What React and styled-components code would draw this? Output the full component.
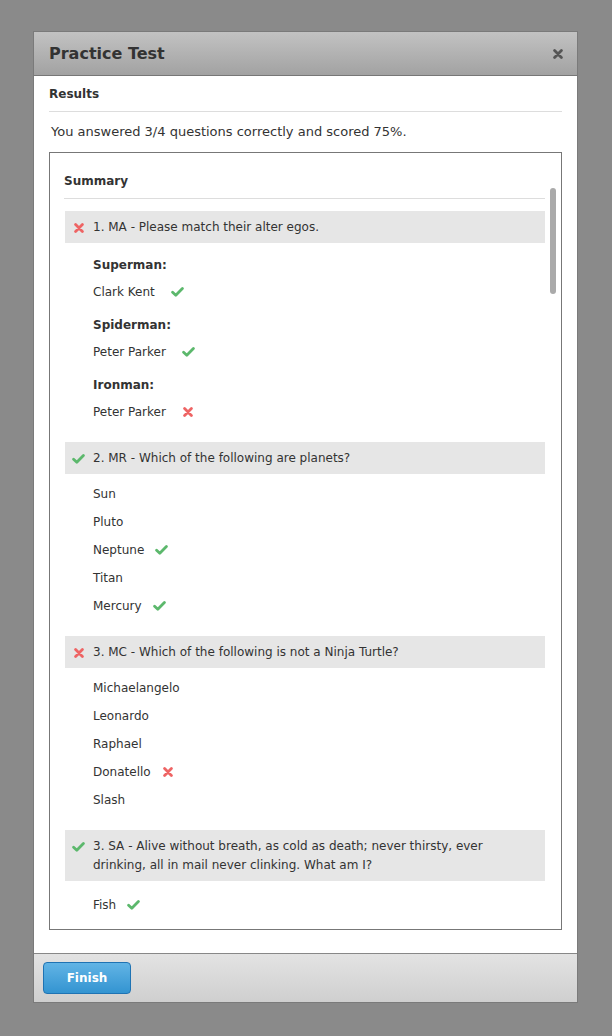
import React from "react";
import styled, { createGlobalStyle } from "styled-components";

const Global = createGlobalStyle`
html, body {
  margin: 0;
  padding: 0;
  background: #8a8a8a;
  font-family: "DejaVu Sans", Verdana, sans-serif;
  color: #333;
}
`;

const Page = styled.div`
  padding: 31px 33px 0 33px;
  height: 1036px;
  box-sizing: border-box;
`;

const Modal = styled.div`
  width: 545px;
  background: #fff;
  border: 1px solid #7a7a7a;
  box-sizing: border-box;
  display: flex;
  flex-direction: column;
`;

const Header = styled.div`
  height: 43px;
  background: linear-gradient(#c2c2c2, #a2a2a2);
  border-bottom: 1px solid #777;
  display: flex;
  align-items: center;
  justify-content: space-between;
  padding: 0 14px 0 15px;
`;

const Title = styled.h1`
  margin: 0;
  font-size: 16px;
  font-weight: bold;
  color: #333;
`;

const Close = styled.span`
  color: #555;
  display: flex;
`;

const Body = styled.div`
  padding: 11px 15px 23px 15px;
`;

const SectionTitle = styled.div`
  font-size: 12px;
  font-weight: bold;
  color: #333;
  padding-bottom: 10px;
  border-bottom: 1px solid #ddd;
`;

const Score = styled.p`
  margin: 12px 0 12px 2px;
  font-size: 13px;
  line-height: 16px;
  color: #333;
`;

const SummaryBox = styled.div`
  position: relative;
  height: 778px;
  border: 1px solid #777;
  box-sizing: border-box;
  overflow: hidden;
`;

const Scroller = styled.div`
  height: 100%;
  overflow-y: auto;
  padding: 21px 16px 0 14px;
  box-sizing: border-box;
  scrollbar-width: none;
  &::-webkit-scrollbar { display: none; }
`;

const Thumb = styled.div`
  position: absolute;
  top: 35px;
  right: 5px;
  width: 6px;
  height: 106px;
  border-radius: 3px;
  background: #aaa;
`;

const SummaryTitle = styled(SectionTitle)`
  padding-bottom: 10px;
  margin-bottom: 12px;
`;

const Question = styled.div`
  margin-bottom: 16px;
`;

const QuestionHead = styled.div`
  display: flex;
  align-items: flex-start;
  background: #e6e6e6;
  padding: 7px 10px 6px 7px;
  margin-left: 1px;
  font-size: 12px;
  line-height: 19px;
  color: #333;
`;

const Mark = styled.span`
  display: inline-flex;
  align-items: center;
  justify-content: center;
  height: 19px;
  width: 13px;
  color: ${(p) => (p.$ok ? "#5cb86c" : "#ee6464")};
  margin-right: ${(p) => p.$gap || 0}px;
  margin-left: ${(p) => p.$left || 0}px;
  flex-shrink: 0;
`;

const Answers = styled.div`
  padding: ${(p) => p.$top}px 0 0 29px;
  display: flex;
  flex-direction: column;
`;

const Label = styled.div`
  font-size: 12px;
  font-weight: bold;
  line-height: 20px;
  margin-top: ${(p) => (p.$first ? 6 : 9)}px;
  margin-bottom: 3px;
`;

const Answer = styled.div`
  display: flex;
  align-items: center;
  font-size: 12px;
  line-height: 20px;
  height: 28px;
`;

const Footer = styled.div`
  height: 48px;
  border-top: 1px solid #888;
  background: linear-gradient(#e3e3e3, #cfcfcf);
  display: flex;
  align-items: center;
  padding: 0 9px;
`;

const FinishButton = styled.button`
  width: 88px;
  height: 32px;
  border: 1px solid #1f73b3;
  border-radius: 4px;
  background: linear-gradient(#62b4e5, #3394d1);
  color: #fff;
  font-family: inherit;
  font-size: 12px;
  font-weight: bold;
  cursor: pointer;
`;

const Cross = ({ size = 10 }) => (
  <svg width={size} height={size} viewBox="0 0 10 10">
    <path d="M1.6 1.6 L8.4 8.4 M8.4 1.6 L1.6 8.4" stroke="currentColor" strokeWidth="2.8" strokeLinecap="round" fill="none" />
  </svg>
);

const Tick = () => (
  <svg width="13" height="10" viewBox="0 0 13 10">
    <path d="M1.6 5.2 L4.8 8.2 L11.4 1.6" stroke="currentColor" strokeWidth="2.8" strokeLinecap="round" strokeLinejoin="round" fill="none" />
  </svg>
);

const Icon = ({ ok, ...rest }) => (
  <Mark $ok={ok} {...rest}>{ok ? <Tick /> : <Cross />}</Mark>
);

const questions = [
  {
    ok: false,
    text: "1. MA - Please match their alter egos.",
    groups: [
      { label: "Superman:", answer: "Clark Kent", ok: true },
      { label: "Spiderman:", answer: "Peter Parker", ok: true },
      { label: "Ironman:", answer: "Peter Parker", ok: false },
    ],
  },
  {
    ok: true,
    text: "2. MR - Which of the following are planets?",
    answers: [
      { text: "Sun" },
      { text: "Pluto" },
      { text: "Neptune", ok: true },
      { text: "Titan" },
      { text: "Mercury", ok: true },
    ],
  },
  {
    ok: false,
    text: "3. MC - Which of the following is not a Ninja Turtle?",
    answers: [
      { text: "Michaelangelo" },
      { text: "Leonardo" },
      { text: "Raphael" },
      { text: "Donatello", ok: false },
      { text: "Slash" },
    ],
  },
  {
    ok: true,
    text: "3. SA - Alive without breath, as cold as death; never thirsty, ever drinking, all in mail never clinking. What am I?",
    short: true,
    answers: [{ text: "Fish", ok: true }],
  },
];

export default function App() {
  return (
    <Page>
      <Global />
      <Modal>
        <Header>
          <Title>Practice Test</Title>
          <Close><Cross size={10} /></Close>
        </Header>
        <Body>
          <SectionTitle>Results</SectionTitle>
          <Score>You answered 3/4 questions correctly and scored 75%.</Score>
          <SummaryBox>
            <Scroller>
              <SummaryTitle>Summary</SummaryTitle>
              {questions.map((q, i) => (
                <Question key={i}>
                  <QuestionHead>
                    <Icon ok={q.ok} $gap={8} />
                    <span>{q.text}</span>
                  </QuestionHead>
                  <Answers $top={q.short ? 10 : 6}>
                    {q.groups &&
                      q.groups.map((g, j) => (
                        <React.Fragment key={j}>
                          <Label $first={j === 0}>{g.label}</Label>
                          <Answer>
                            {g.answer}
                            <Icon ok={g.ok} $left={16} />
                          </Answer>
                        </React.Fragment>
                      ))}
                    {q.answers &&
                      q.answers.map((a, j) => (
                        <Answer key={j}>
                          {a.text}
                          {a.ok !== undefined && <Icon ok={a.ok} $left={11} />}
                        </Answer>
                      ))}
                  </Answers>
                </Question>
              ))}
            </Scroller>
            <Thumb />
          </SummaryBox>
        </Body>
        <Footer>
          <FinishButton>Finish</FinishButton>
        </Footer>
      </Modal>
    </Page>
  );
}
